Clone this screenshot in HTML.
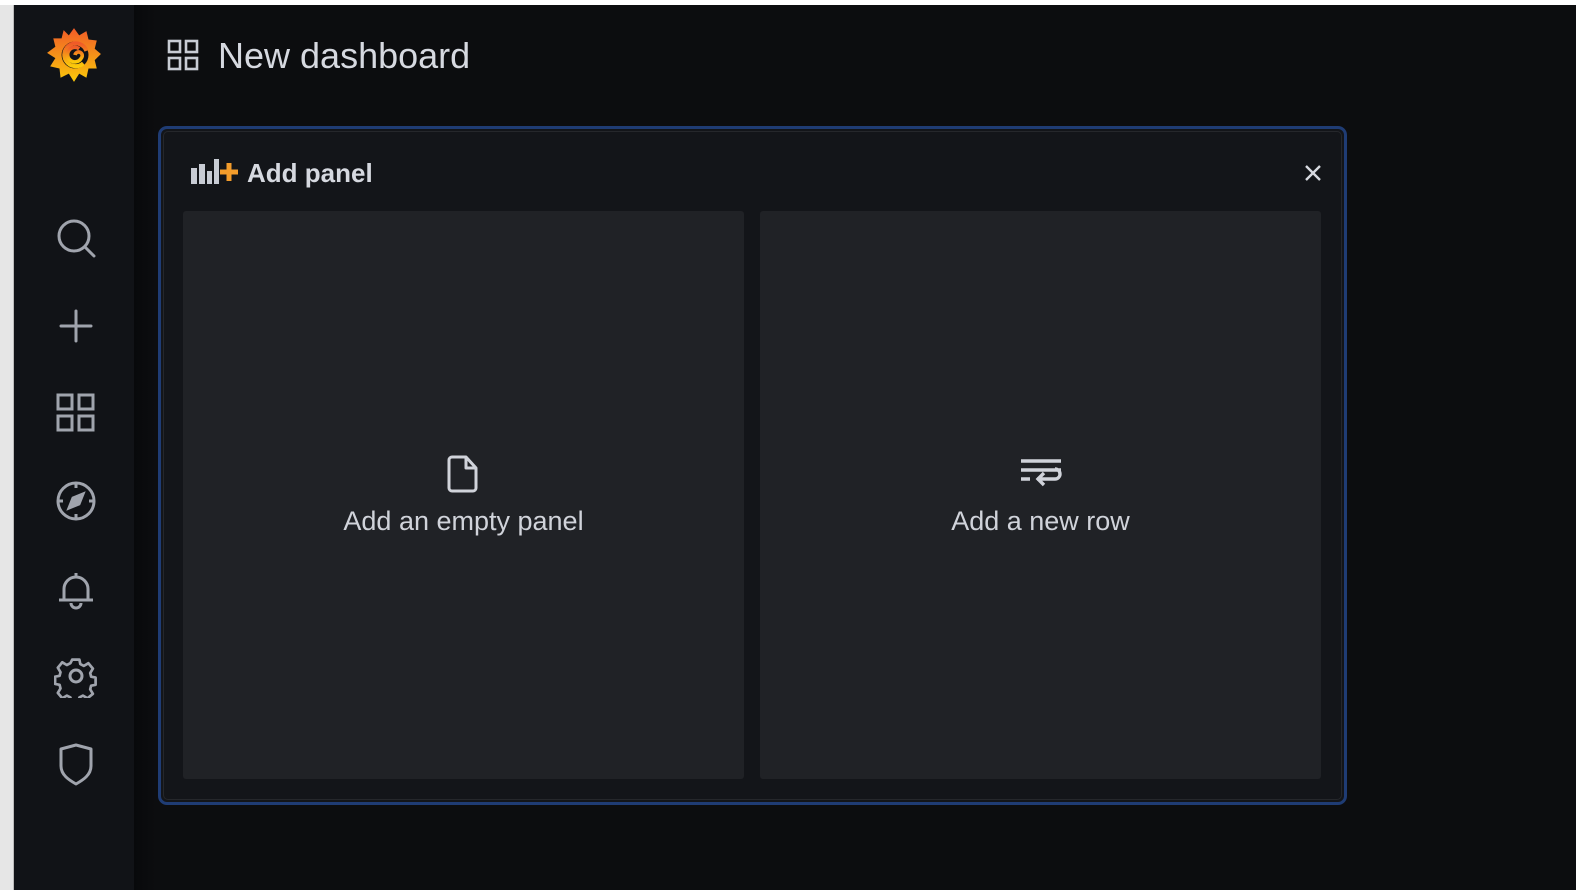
<!DOCTYPE html>
<html><head><meta charset="utf-8"><style>
*{margin:0;padding:0;box-sizing:border-box}
body{width:1576px;height:890px;overflow:hidden;background:#0c0d0f;font-family:"Liberation Sans",Arial,sans-serif;position:relative}
.top{position:absolute;left:0;top:0;width:1576px;height:5px;background:#fff}
.lstrip{position:absolute;left:0;top:5px;width:14px;height:885px;background:#e6e6e6;border-right:1px solid #bbb}
.side{position:absolute;left:14px;top:5px;width:120px;height:885px;background:#111317}
.shade{position:absolute;left:134px;top:5px;width:22px;height:885px;background:linear-gradient(90deg,#08090b,#0c0d0f)}
.ico{position:absolute;left:54px;width:44px;height:44px}
.title{position:absolute;left:218px;top:35px;font-size:36px;color:#d6d9e0}
.panel{position:absolute;left:158px;top:126px;width:1189px;height:679px;border:3px solid #1f3c74;border-radius:9px;background:#131519}
.inner{position:absolute;left:2px;top:2px;right:2px;bottom:2px;border:1px solid #25272b;border-radius:5px}
.ptitle{position:absolute;top:158px;font-size:26px;font-weight:bold;color:#d6d9e0}
.card{position:absolute;top:211px;width:561px;height:568px;background:#202226;border-radius:3px;color:#d0d3da;font-size:27px;text-align:center}
.card span{position:absolute;left:0;right:0;top:295px}
</style></head><body>
<div class="top"></div><div class="lstrip"></div><div class="side"></div><div class="shade"></div>
<svg style="position:absolute;left:46px;top:26px" width="56" height="58" viewBox="0 0 52 56">
<defs><linearGradient id="g" x1="0" y1="0" x2="0" y2="1"><stop offset="0" stop-color="#f05a28"/><stop offset="1" stop-color="#fbca0a"/></linearGradient></defs>
<path d="M26 2 L31 9 L38 5 L40 13 L48 14 L46 22 L52 27 L46 33 L48 41 L40 41 L38 50 L31 46 L26 54 L21 46 L13 50 L12 41 L3 39 L8 31 L0 26 L8 20 L6 12 L14 12 L16 4 L21 9Z" fill="url(#g)"/>
<circle cx="27" cy="28" r="13" fill="#111317"/>
<path d="M38 24 A11 11 0 1 0 35 36" fill="none" stroke="url(#g)" stroke-width="4"/>
<path d="M31 22 A7 7 0 1 0 33 31 A3.5 3.5 0 1 0 27 28" fill="none" stroke="url(#g)" stroke-width="3.5"/>
</svg>
<svg style="position:absolute;left:167px;top:39px" width="32" height="32" viewBox="0 0 32 32" fill="none" stroke="#c8ccd4" stroke-width="2.6"><rect x="2" y="2" width="11" height="11"/><rect x="19" y="2" width="11" height="11"/><rect x="2" y="19" width="11" height="11"/><rect x="19" y="19" width="11" height="11"/></svg>
<div class="title">New dashboard</div>
<svg class="ico" style="top:216px" viewBox="0 0 44 44" fill="none" stroke="#a0a4ad" stroke-width="3" stroke-linecap="round"><circle cx="20" cy="20" r="15"/><path d="M31 31l9 9"/></svg>
<svg class="ico" style="top:304px" viewBox="0 0 44 44" fill="none" stroke="#a0a4ad" stroke-width="3" stroke-linecap="round"><path d="M22 7v30M7 22h30"/></svg>
<svg class="ico" style="top:391px" viewBox="0 0 44 44" fill="none" stroke="#a0a4ad" stroke-width="3"><rect x="4" y="4" width="14" height="14"/><rect x="25" y="4" width="14" height="14"/><rect x="4" y="25" width="14" height="14"/><rect x="25" y="25" width="14" height="14"/></svg>
<svg class="ico" style="top:479px" viewBox="0 0 44 44" fill="none" stroke="#a0a4ad" stroke-width="3"><circle cx="22" cy="22" r="18"/><path d="M22 4v5M22 35v5M4 22h5M35 22h5"/><path d="M15 29l4-10 10-4-4 10z" fill="#a0a4ad"/></svg>
<svg class="ico" style="top:567px" viewBox="0 0 44 44" fill="none" stroke="#a0a4ad" stroke-width="3" stroke-linejoin="round"><path d="M22 6v3M10 32V22a12 12 0 0 1 24 0v10M5 33h34M17 36a5 5 0 0 0 10 0"/></svg>
<svg class="ico" style="top:654px" viewBox="0 0 44 44" fill="none" stroke="#a0a4ad" stroke-width="3" stroke-linejoin="round"><path d="M18 4h8l1 5 4 2 5-3 5 6-3 5 1 4 5 1v8l-5 1-1 4 3 5-6 5-5-3-4 2-1 5h-8l-1-5-4-2-5 3-5-6 3-5-1-4-5-1v-8l5-1 1-4-3-5 5-6 5 3 4-2z" transform="translate(2,2) scale(0.9)"/><circle cx="22" cy="22" r="6"/></svg>
<svg class="ico" style="top:742px" viewBox="0 0 44 44" fill="none" stroke="#a0a4ad" stroke-width="3" stroke-linejoin="round"><path d="M7 7l15-4 15 4v17c0 9-8 14-15 18C15 38 7 33 7 24z"/></svg>
<div class="panel"><div class="inner"></div></div>
<svg style="position:absolute;left:191px;top:159px" width="48" height="26" viewBox="0 0 48 26"><g fill="#c8ccd4"><rect x="0" y="9" width="6" height="16"/><rect x="8" y="5" width="6" height="20"/><rect x="16" y="12" width="5" height="13"/><rect x="23" y="0" width="5" height="25"/></g><path d="M29 13h18M38 4v18" stroke="#f39c2b" stroke-width="5"/></svg>
<div class="ptitle" style="left:247px">Add panel</div>
<svg style="position:absolute;left:1303px;top:163px" width="20" height="20" viewBox="0 0 20 20" stroke="#d6d9e0" stroke-width="2.4"><path d="M3 3l14 14M17 3L3 17"/></svg>
<div class="card" style="left:183px"><svg style="position:absolute;left:264px;top:243px" width="34" height="40" viewBox="0 0 34 40" fill="none" stroke="#d0d3da" stroke-width="3" stroke-linejoin="round"><path d="M5 3h14l10 11v20a3 3 0 0 1-3 3H5a3 3 0 0 1-3-3V6a3 3 0 0 1 3-3z"/><path d="M19 3v11h10"/></svg><span>Add an empty panel</span></div>
<div class="card" style="left:760px"><svg style="position:absolute;left:259px;top:247px" width="44" height="32" viewBox="0 0 44 32" fill="none" stroke="#d0d3da" stroke-width="3.4"><path d="M2 3h40M2 12h40M2 21h9M18 21h18a5 5 0 0 0 0-10M25 15l-6 6 6 6"/></svg><span>Add a new row</span></div>
</body></html>
